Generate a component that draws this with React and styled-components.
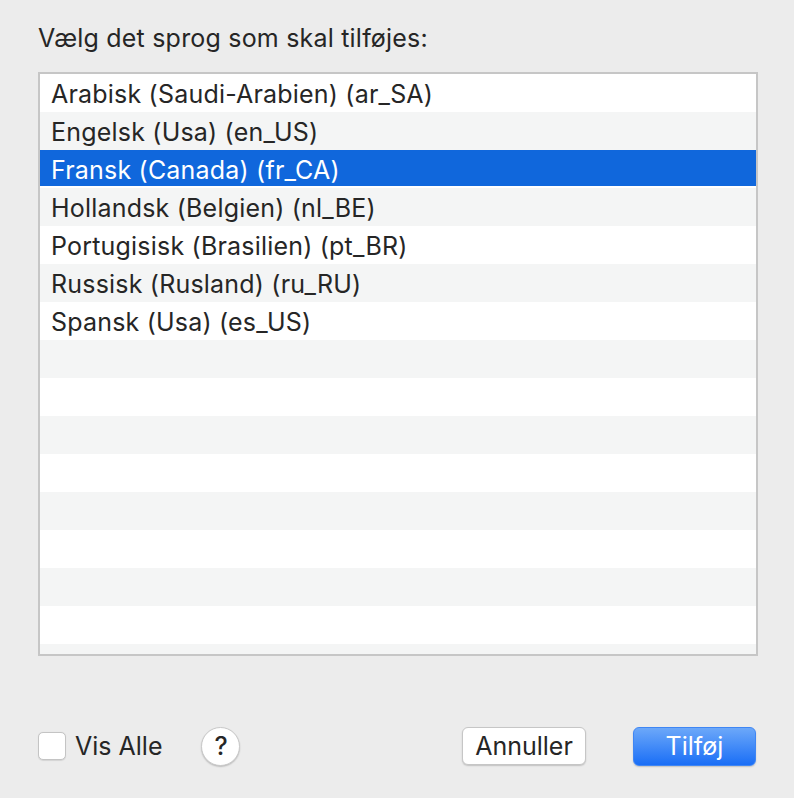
import React from 'react'
import styled, { createGlobalStyle } from 'styled-components'

const languages = [
  'Arabisk (Saudi-Arabien) (ar_SA)',
  'Engelsk (Usa) (en_US)',
  'Fransk (Canada) (fr_CA)',
  'Hollandsk (Belgien) (nl_BE)',
  'Portugisisk (Brasilien) (pt_BR)',
  'Russisk (Rusland) (ru_RU)',
  'Spansk (Usa) (es_US)',
]

const TOTAL_ROWS = 16
const SELECTED = 2

export default function App() {
  const rows = Array.from({ length: TOTAL_ROWS }, (_, i) => languages[i] || '')
  return (
    <>
      <GlobalStyle />
      <Dialog>
        <Title>Vælg det sprog som skal tilføjes:</Title>
        <ListBox>
          {rows.map((label, i) => (
            <Row key={i} $odd={i % 2 === 1} $selected={i === SELECTED}>
              {label}
            </Row>
          ))}
        </ListBox>
        <Footer>
          <CheckLabel>
            <Checkbox />
            Vis Alle
          </CheckLabel>
          <HelpButton>?</HelpButton>
          <Spacer />
          <Button>Annuller</Button>
          <PrimaryButton>Tilføj</PrimaryButton>
        </Footer>
      </Dialog>
    </>
  )
}

// ------- STYLES -------
const GlobalStyle = createGlobalStyle`
  html, body {
    margin: 0;
    padding: 0;
    background: #ececec;
  }
  body {
    font-family: Inter, "Noto Sans", "Liberation Sans", sans-serif;
    color: #262626;
  }
`

const Dialog = styled.div`
  width: 794px;
  height: 798px;
  box-sizing: border-box;
  padding: 21px 38px 0 38px;
  display: flex;
  flex-direction: column;
  background: #ececec;
`

const Title = styled.div`
  font-size: 25px;
  line-height: 34px;
  letter-spacing: 0.2px;
  height: 51px;
  color: #262626;
`

const ListBox = styled.div`
  width: 720px;
  height: 584px;
  box-sizing: border-box;
  border: 2px solid #c6c6c6;
  background: #ffffff;
  overflow: hidden;
`

const Row = styled.div`
  height: 38px;
  box-sizing: border-box;
  padding: 2px 0 0 11px;
  font-size: 25px;
  line-height: 36px;
  letter-spacing: 0.2px;
  color: ${p => (p.$selected ? '#ffffff' : '#262626')};
  background: ${p =>
    p.$selected
      ? 'linear-gradient(#1067dc 0, #1067dc 36px, #ffffff 36px)'
      : p.$odd
      ? '#f4f5f5'
      : '#ffffff'};
  white-space: nowrap;
`

const Footer = styled.div`
  display: flex;
  align-items: center;
  margin-top: 70px;
  height: 40px;
`

const CheckLabel = styled.label`
  display: flex;
  align-items: center;
  gap: 9px;
  font-size: 25px;
  color: #262626;
`

const Checkbox = styled.span`
  width: 26px;
  height: 26px;
  border: 1px solid #c4c4c4;
  border-radius: 5px;
  background: #ffffff;
  box-shadow: 0 0.5px 1px rgba(0, 0, 0, 0.1);
`

const HelpButton = styled.button`
  margin-left: 39px;
  width: 39px;
  height: 39px;
  border-radius: 50%;
  border: 1px solid #c9c9c9;
  background: #ffffff;
  box-shadow: 0 1px 1.5px rgba(0, 0, 0, 0.2);
  font-family: inherit;
  font-size: 25px;
  font-weight: 500;
  color: #262626;
  padding: 0;
  display: flex;
  align-items: center;
  justify-content: center;
`

const Spacer = styled.div`
  flex: 1;
`

const Button = styled.button`
  width: 124px;
  height: 38px;
  box-sizing: border-box;
  border-radius: 6px;
  border: 1px solid #c6c6c6;
  background: #ffffff;
  box-shadow: 0 1px 1.5px rgba(0, 0, 0, 0.18);
  font-family: inherit;
  font-size: 25px;
  color: #262626;
  padding: 0;
`

const PrimaryButton = styled(Button)`
  margin-left: 47px;
  width: 123px;
  height: 39px;
  border: 1px solid #3f86f4;
  background: linear-gradient(#6ca8f9, #1a6ef6);
  color: #ffffff;
`
